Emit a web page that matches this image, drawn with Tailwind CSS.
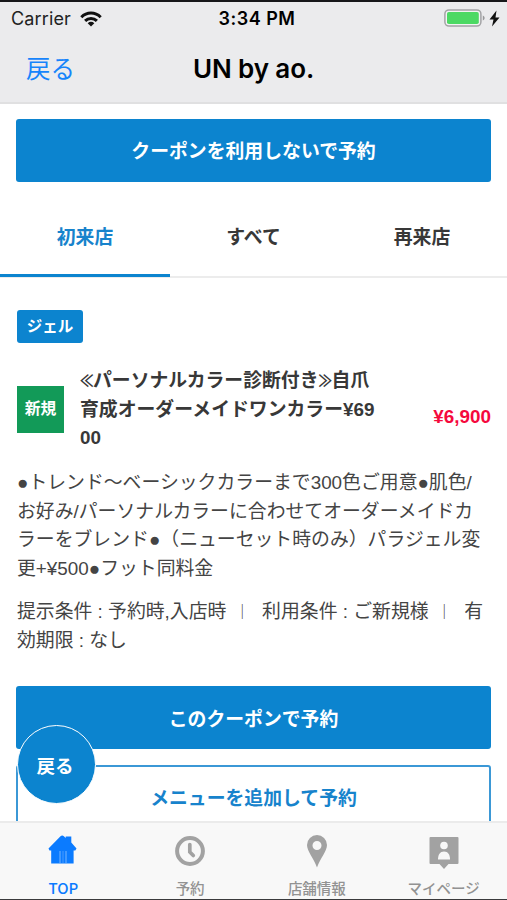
<!DOCTYPE html>
<html lang="ja">
<head>
<meta charset="utf-8">
<title>UN by ao.</title>
<script src="https://cdn.jsdelivr.net/npm/@tailwindcss/browser@4"></script>
</head>
<body class="w-[507px] h-[900px] overflow-hidden bg-white font-['Liberation_Sans','Noto_Sans_CJK_JP',sans-serif] text-[18.85px] text-[#383838]">
<div class="relative flex flex-col h-[900px] border-t-2 border-t-[#17171a] border-b border-b-[#3a3a3c]">
  <header class="h-[102px] shrink-0 bg-[#ebebed] border-b-2 border-[#e0e0e1] text-black font-['Inter','Noto_Sans_CJK_JP',sans-serif]">
    <div class="h-8 px-[11px] grid grid-cols-[1fr_auto_1fr] items-center text-[18px] leading-8">
      <div class="flex items-center gap-[9px]">
        <span class="tracking-[0.15px] text-[#222] pt-px">Carrier</span>
        <svg class="w-[22px] h-[16px]" viewBox="0 0 22 16" fill="none" stroke="#111" stroke-width="3"><path d="M1.3 6.2C6.8.7 15.2.7 20.7 6.2"/><path d="M5.1 9.900c3.3-3.3 8.500-3.300 11.800 0"/><path d="M11 15.500 7.700 12.200c1.900-1.800 4.700-1.800 6.600 0z" fill="#111" stroke="none"/></svg>
      </div>
      <span class="font-semibold text-[18px] tracking-[0.5px] pl-[7px] pt-px">3:34 PM</span>
      <div class="flex items-center justify-end gap-[4px] -mr-[4px] -mt-px">
        <svg class="w-[41px] h-[18px]" viewBox="0 0 41 18"><rect x=".9" y=".9" width="36" height="16.200" rx="4" fill="#f3f3f4" stroke="#a3a3a5" stroke-width="1.500"/><rect x="3" y="3" width="31.800" height="12" rx="1.800" fill="#4cd964"/><path d="M38.800 6.500c2.400.8 2.400 4.200 0 5z" fill="#98989a"/></svg>
        <svg class="w-[11px] h-[17px]" viewBox="0 0 11 17"><path d="M7.500.5.5 9.500h4L3 16.500l7.500-9h-4z" fill="#111"/></svg>
      </div>
    </div>
    <div class="h-[68px] grid grid-cols-[1fr_auto_1fr] items-center px-[26px]">
      <a class="text-[24.500px] text-[#1684fb] pt-[2px]">戻る</a>
      <h1 class="text-[26px] font-semibold tracking-[-0.100px]">UN by ao.</h1>
      <span></span>
    </div>
  </header>

  <main class="flex-1 min-h-0 overflow-hidden">
    <div class="pt-[15px] px-4">
      <button class="block w-[475px] h-[63px] pt-1 rounded-[3px] bg-[#0c84cf] text-white font-bold">クーポンを利用しないで予約</button>
    </div>
    <nav class="mt-[14px] h-[82px] grid grid-cols-[170px_167px_170px] font-bold text-center leading-[84px] border-b-2 border-[#ececec]">
      <a class="h-[81px] text-[#1783cc] border-b-[3px] border-[#0c84cf]">初来店</a>
      <a>すべて</a>
      <a>再来店</a>
    </nav>
    <section class="pt-[32px] pl-[17px] pr-4">
      <span class="block w-[66px] h-[33px] rounded-[3px] bg-[#0c84cf] text-white text-center text-[15.500px] leading-[33px] font-bold">ジェル</span>
      <div class="mt-[23px] h-[86px] flex items-center">
        <span class="w-[47px] h-[47px] bg-[#129a58] text-white text-center text-[15.800px] leading-[46px] font-bold">新規</span>
        <h2 class="ml-4 mt-[2px] w-[310px] font-bold leading-[28.500px] whitespace-nowrap"><span class="inline-block w-[13px] text-[13.500px] leading-5 align-[1.500px] scale-y-125">≪</span>パーソナルカラー診断付き<span class="inline-block w-[13px] text-[13.500px] leading-5 align-[1.500px] scale-y-125">≫</span>自爪<br>育成オーダーメイドワンカラー¥69<br>00</h2>
        <span class="ml-auto mt-[16px] text-[#f5093d] font-bold">¥6,900</span>
      </div>
      <p class="mt-[17px] leading-[28.500px] text-[#444] whitespace-nowrap">●トレンド〜ベーシックカラーまで300色ご用意●肌色/<br>お好み/パーソナルカラーに合わせてオーダーメイドカ<br>ラーをブレンド●（ニューセット時のみ）パラジェル変<br>更+¥500●フット同料金</p>
      <p class="mt-[15px] leading-[28.500px] text-[#444] whitespace-nowrap">提示条件 : 予約時,入店時 <span class="inline-block w-[19px] h-5 pl-[3px] text-[15px] leading-5 align-[1px]">｜</span> &nbsp;<span class="ml-px">利用条件 : ご新規様</span> <span class="inline-block w-[19px] h-5 pl-[3px] text-[15px] leading-5 align-[1px]">｜</span> &nbsp;<span class="ml-px">有</span><br>効期限 : なし</p>
    </section>
    <div class="mt-[31px] px-4 flex flex-col gap-4 font-bold">
      <button class="w-[475px] h-[63px] pt-[5px] shrink-0 rounded-[3px] bg-[#0c84cf] text-white">このクーポンで予約</button>
      <button class="w-[475px] h-[63px] pt-[5px] shrink-0 rounded-[3px] bg-white border-2 border-[#3b98d6] text-[#1783cc]">メニューを追加して予約</button>
    </div>
  </main>

  <button class="absolute left-[17px] top-[723px] w-[79px] h-[79px] pt-[5px] pr-[3px] rounded-full border-[1.500px] border-white bg-[#0c84cf] text-white text-[18.500px] font-bold">戻る</button>

  <footer class="h-[78px] shrink-0 grid grid-cols-4 bg-[#f8f8f8] border-t-2 border-[#ebebeb] text-[14.500px] text-[#929292] font-medium font-['Noto_Sans_CJK_JP',sans-serif]">
    <a class="flex flex-col items-center pt-[10px] gap-[9px] text-[#0b7bff]">
      <svg class="w-9 h-9" viewBox="0 0 36 36" fill="currentColor"><path d="m3.500 15.500L15.500 3.200q1.700-1.600 3.400 0l1.800 1.800V3.500h5.600v6l5.200 6-1.200 2h-1.700v13H22V18h-8v12.500H6.200v-13H4.500z"/><path d="M14 18h8v12.500h-8z"/><path d="M15 30V18M21 30V18" stroke="#78b7ff" stroke-width="1"/><path d="M18 30V18" stroke="#489bff" stroke-width="1"/></svg>
      <span class="leading-5 text-[15px]">TOP</span></a>
    <a class="flex flex-col items-center pt-[10px] gap-[9px]">
      <svg class="w-9 h-9" viewBox="0 0 36 36" fill="none" stroke="#a2a2a2"><circle cx="18" cy="18" r="12.900" stroke-width="4"/><path d="M17.800 11.500v7.500l3.500 3.500" stroke-width="3.700" stroke-linecap="round"/></svg>
      <span class="leading-5">予約</span></a>
    <a class="flex flex-col items-center pt-[10px] gap-[9px]">
      <svg class="w-9 h-9" viewBox="0 0 36 36" fill="#a2a2a2"><path fill-rule="evenodd" d="M18 2a10 10 0 0 0-10 10c0 6 6.500 13 10 22.500C21.500 25 28 18 28 12A10 10 0 0 0 18 2m0 6a4.500 4.500 0 1 1 0 9 4.500 4.500 0 0 1 0-9"/></svg>
      <span class="leading-5">店舗情報</span></a>
    <a class="flex flex-col items-center pt-[10px] gap-[9px]">
      <svg class="w-9 h-9" viewBox="0 0 36 36"><path d="M4.500 4h27q1 0 1 1v25q0 1-1 1h-9L18 36l-4.500-5h-9q-1 0-1-1V5q0-1 1-1" fill="#a2a2a2"/><circle cx="18" cy="12.500" r="3.800" fill="#f8f8f8"/><path d="M12 26.500c0-5 2-8 6-8s6 3 6 8z" fill="#f8f8f8"/></svg>
      <span class="leading-5">マイページ</span></a>
  </footer>
</div>
</body>
</html>
